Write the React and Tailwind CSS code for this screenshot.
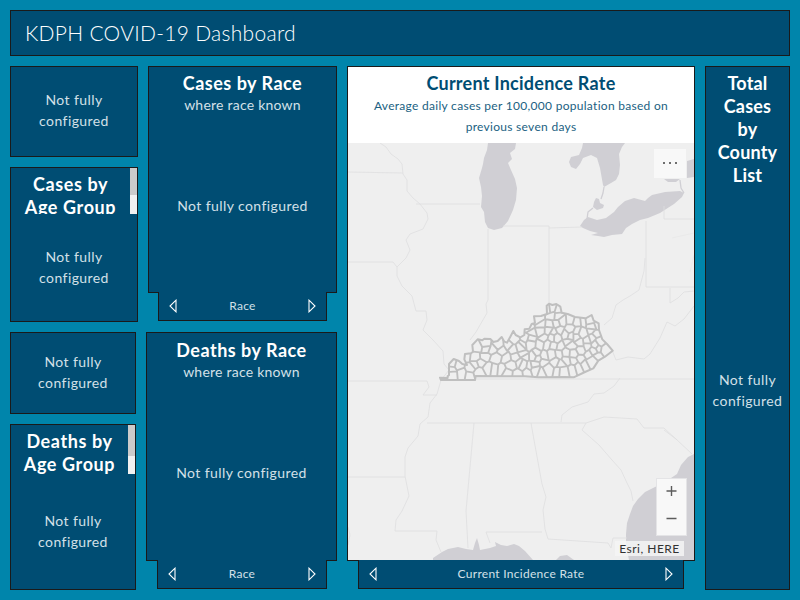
import React from "react";

const OUTLINE = [
  [285, 413], [308, 414], [308, 409], [312, 405], [312, 372], [326, 357], [342, 363], [352, 372], [366, 375],
  [358, 358], [360, 342], [378, 340], [384, 335], [382, 315], [398, 298], [412, 301], [418, 296], [436, 297],
  [445, 306], [458, 303], [470, 291], [478, 305], [486, 308], [496, 290], [505, 273], [512, 285], [526, 292],
  [538, 285], [539, 268], [553, 266], [560, 252], [570, 249], [567, 229], [588, 228], [606, 222], [605, 197],
  [612, 191], [622, 195], [634, 192], [646, 200], [650, 218], [668, 222], [690, 231], [722, 235], [740, 225],
  [746, 242], [761, 250], [762, 270], [772, 298], [786, 312], [803, 332], [780, 350], [760, 362], [745, 385],
  [720, 396], [686, 412], [660, 411], [580, 412], [540, 409], [392, 408], [390, 420], [288, 420],
];

const WEST = [
  [70, 203], [88, 208], [68, 222], [68, 240], [93, 235], [118, 240], [118, 220], [112, 188], [130, 188],
  [135, 208], [150, 205], [150, 232], [172, 220], [192, 222], [212, 222], [140, 155], [165, 142], [168, 162],
  [165, 185], [190, 165], [205, 148], [215, 168], [198, 188], [228, 190], [245, 210], [235, 235], [260, 236],
  [268, 205], [250, 135], [232, 150], [250, 165], [275, 155], [255, 185], [280, 178],
];

const EAST = [
  [10, 150], [15, 185], [8, 208], [30, 210], [22, 232], [50, 228], [42, 208], [35, 185], [55, 190], [15, 130],
  [38, 112], [35, 130], [30, 150], [30, 98], [60, 108], [52, 72], [62, 88], [85, 40], [98, 38], [112, 42],
  [95, 65], [90, 85], [115, 65], [108, 85], [130, 80], [150, 75], [170, 80], [190, 78], [210, 75], [215, 95],
  [230, 90], [150, 98], [120, 105], [85, 105], [100, 112], [135, 120], [115, 130], [95, 130], [70, 130],
  [60, 150], [50, 170], [80, 150], [100, 150], [122, 150], [145, 140], [155, 125], [170, 105], [190, 115],
  [210, 110], [170, 125], [155, 152], [180, 142], [200, 135], [215, 130], [230, 120], [238, 140], [225, 148],
  [205, 155], [185, 165], [160, 175], [140, 175], [118, 178], [95, 178], [75, 180], [70, 200], [85, 225],
  [105, 200], [125, 205], [130, 230], [155, 225], [140, 198], [160, 198], [180, 190], [205, 180], [220, 168],
  [235, 160], [255, 165], [235, 180], [215, 200], [195, 210], [175, 218], [65, 235], [112, 228],
];

const SEEDS = [
  ...WEST.map(([x, y]) => [x + 255, y + 165]),
  ...EAST.map(([x, y]) => [x + 525, y + 165]),
];

// Voronoi cell of one seed, by clipping a box with each bisector.
function cell(seed) {
  let poly = [[270, 170], [820, 170], [820, 440], [270, 440]];
  for (const other of SEEDS) {
    if (other === seed) continue;
    const nx = other[0] - seed[0];
    const ny = other[1] - seed[1];
    const c = (nx * (other[0] + seed[0]) + ny * (other[1] + seed[1])) / 2;
    const next = [];
    poly.forEach((p, i) => {
      const q = poly[(i + 1) % poly.length];
      const dp = p[0] * nx + p[1] * ny - c;
      const dq = q[0] * nx + q[1] * ny - c;
      if (dp <= 0) next.push(p);
      if (dp < 0 !== dq < 0) {
        const t = dp / (dp - dq);
        next.push([p[0] + t * (q[0] - p[0]), p[1] + t * (q[1] - p[1])]);
      }
    });
    poly = next;
  }
  return poly;
}

// Irregular but continuous displacement, so that shared borders stay shared.
const warp = ([x, y]) => [x + 3 * Math.sin(x * 0.31 + y * 0.47), y + 3 * Math.sin(x * 0.43 - y * 0.29)];
const toPath = (pts) => "M" + pts.map((p) => p[0].toFixed(1) + " " + p[1].toFixed(1)).join("L") + "Z";
const COUNTIES = SEEDS.map((s) => toPath(cell(s).map(warp))).join("");
const STATE = toPath(OUTLINE);

function BaseMap() {
  return (
    <svg className="block h-full w-full" viewBox="348 143 346 417" preserveAspectRatio="none">
      <defs>
        <clipPath id="state"><path d={STATE} /></clipPath>
      </defs>
      <rect x="348" y="143" width="346" height="417" fill="#efefef" />
      <g fill="#d0cfd4">
        {/* lakes */}
        <path d="M488 143L487 150L484 158L483 164L482 168L479 178L481 187L482 196L481 207L484 212L485 222L488 228L494 230L502 228L508 221L513 210L516 200L517 188L515 179L511 170L508 163L512 159L510 153L515 149L516 143Z" />
        <path d="M583 143L582 148L579 155L571 157L569 162L571 167L576 169L580 164L583 158L591 155L597 158L600 168L603 185L604 187L611 183L616 180L619 174L620 165L619 154L622 147L625 143Z" />
        <path d="M596 198L599 199L600 203L604 205L603 208L597 210L593 207L594 202Z" />
        <path d="M580 226L584 220L588 217L597 220L606 218L614 212L618 207L625 201L634 198L645 201L648 198L652 195L665 192L680 191L684 193L682 197L674 204L660 213L648 218L640 220L632 224L626 228L622 234L612 235L604 237L598 236L591 235L598 233L590 231L583 228Z" />
        <path d="M664 179L680 179L676 182L668 182Z" />
        <path d="M687 161L694 159L694 177L687 178Z" />
        {/* Gulf coast */}
        <path d="M433 558L442 552L448 549L458 547L466 549L473 550L475 543L477 538L479 545L480 550L490 548L496 546L495 542L501 545L507 546L514 544L519 546L525 551L533 560L433 560Z" />
        <path d="M556 560L560 556L567 555L574 560Z" />
        {/* Atlantic coast */}
        <path d="M694 454L688 457L681 465L677 474L668 480L657 486L645 492L638 499L633 506L630 514L627 523L626 534L626 545L629 560L694 560Z" />
      </g>
      <g fill="none" stroke="#dedee0" strokeWidth=".8" strokeLinejoin="round">
        <path d="M604 187L603 193L601 199M593 208L588 212L587 219M680 180L681 188L684 193" strokeWidth="1.3" stroke="#d0cfd4" />
        <path d="M380 143L386 147L391 154L398 159L402 164L403 174L407 180L407 191L413 198L420 204L427 213L428 219L423 229L410 234L406 240L410 250L406 258L397 267L397 276L402 286L412 296L416 311L426 311L427 320L423 330L433 340L443 351L444 364L449 370L441 380L437 394L430 403L428 417L420 424L418 436L408 448L405 457L405 476L409 496L402 511L396 520L395 531L437 531L436 540L441 552" />
        <path d="M348 172L403 173M416 204L480 204M348 262L393 262L397 267M488 229L488 300L486 304L487 313L480 325L476 332L470 340M503 226L549 226L549 304M549 228L582 227M646 221L646 287L694 287M645 258L644 271L639 290L630 296L623 300L616 305L612 318L604 325M664 206L664 219L694 219M670 288L670 303L678 298L684 292L694 291M694 306L684 319L675 326L667 322L660 338L650 354L644 359L628 357L616 360L612 350" />
        <path d="M348 381L427 381L429 387L423 395L437 395M476 379L694 379M427 423L586 423L604 417L637 419L644 428L664 428L677 440M586 423L582 430L599 445L612 460L621 470L627 483L631 491L633 501M561 422L562 415L572 407L588 402L594 394L604 393L614 386L620 378M474 423L466 511L468 548M531 423L534 440L542 484L546 497L543 510L545 529L548 539L608 543L611 548L613 538L627 538M486 532L542 532M486 532L490 543M664 430L676 439L692 454M348 477L405 477M348 527L350 535L348 545" />
        <path d="M694 233L672 238M694 255L690 272" opacity=".4" />
      </g>
      <g transform="translate(345 240) scale(.33333)" fill="none" stroke="#bfbfbf" strokeLinejoin="round">
        <path d={COUNTIES} strokeWidth="5.6" clipPath="url(#state)" />
        <path d={STATE} strokeWidth="6" />
      </g>
    </svg>
  );
}

const box = "border border-[#1a1a1a] bg-[#004d73]";

function Empty({ narrow, className = "" }) {
  return (
    <div className={"flex flex-1 items-center justify-center text-center text-[14px] leading-[21px] tracking-[.42px] text-[#d3e0e8] " + className}>
      {narrow ? <p>Not fully<br />configured</p> : <p>Not fully configured</p>}
    </div>
  );
}

function Arrow({ right }) {
  return (
    <svg className="h-[14px] w-[8px]" viewBox="0 0 8 14" fill="none" stroke="#fff" strokeWidth="1.1">
      <path d={right ? "M1 1.2V12.8L7 7Z" : "M7 1.2V12.8L1 7Z"} />
    </svg>
  );
}

function Tab({ label, className }) {
  return (
    <div className={"relative -mt-px flex justify-between border border-t-0 border-[#1a1a1a] bg-[#004d73] pt-[7px] text-[12px] leading-[14px] tracking-[.28px] text-[#d3e0e8] " + className}>
      <Arrow />
      <span>{label}</span>
      <Arrow right />
    </div>
  );
}

function Scroller({ lines, className, thumb }) {
  return (
    <div className={"flex overflow-hidden " + className}>
      <h2 className="flex-1 pt-[5px] text-center text-[18px] leading-[23px] font-bold tracking-[.6px] whitespace-nowrap text-white">
        {lines[0]}<br />{lines[1]}
      </h2>
      <div className="w-[7px] shrink-0 bg-[#f1f1f1]">
        <div className={"bg-[#cbcbcb] " + thumb} />
      </div>
    </div>
  );
}

function RaceCard({ title, className }) {
  return (
    <div className={"flex flex-col text-center " + box + " " + className}>
      <h2 className="text-[18px] leading-[23px] font-bold tracking-[.5px] text-white">{title}</h2>
      <p className="-mt-px text-[14px] leading-[21px] tracking-[.23px] text-[#d3e0e8]">where race known</p>
      <Empty className="pt-[3px]" />
    </div>
  );
}

export default function App() {
  return (
    <div className="flex h-[600px] w-[800px] flex-col gap-[10px] overflow-hidden bg-[#0085ab] p-[10px] font-['Lato','Open_Sans',sans-serif]">
      <header className={"flex h-[46px] shrink-0 items-center pl-[14px] " + box}>
        <h1 className="text-[21px] font-light tracking-[.28px] whitespace-nowrap text-white">KDPH COVID-19 Dashboard</h1>
      </header>
      <main className="flex h-[524px] gap-[10px]">
        <div className="flex w-[327px] shrink-0 flex-col gap-[10px]">
          <div className="flex h-[256px] gap-[10px]">
            <div className="flex w-[128px] flex-col gap-[10px]">
              <section className={"flex h-[91px] " + box}><Empty narrow className="pb-[3px]" /></section>
              <section className={"flex h-[155px] flex-col " + box}>
                <Scroller lines={["Cases by", "Age Group"]} className="h-[46px]" thumb="h-[27px]" />
                <div className="flex h-[108px]"><Empty narrow /></div>
              </section>
            </div>
            <section className="flex w-[189px] flex-col">
              <RaceCard title="Cases by Race" className="h-[227px] pt-[5px]" />
              <Tab label="Race" className="mr-[10px] ml-[10px] h-[29px] px-[10px]" />
            </section>
          </div>
          <div className="flex h-[258px] gap-[10px]">
            <div className="flex w-[126px] flex-col gap-[10px]">
              <section className={"flex h-[82px] " + box}><Empty narrow className="pb-[2px]" /></section>
              <section className={"flex h-[166px] flex-col " + box}>
                <Scroller lines={["Deaths by", "Age Group"]} className="h-[49px]" thumb="h-[31px]" />
                <div className="flex flex-1"><Empty narrow className="pb-[2px]" /></div>
              </section>
            </div>
            <section className="flex w-[191px] flex-col">
              <RaceCard title="Deaths by Race" className="h-[229px] pt-[6px]" />
              <Tab label="Race" className="mr-[10px] ml-[11px] h-[29px] px-[10px]" />
            </section>
          </div>
        </div>
        <section className="flex w-[348px] shrink-0 flex-col">
          <div className="h-[495px] border border-[#1a1a1a] bg-white">
            <div className="h-[76px] pt-[5px] text-center text-[#004d73]">
              <h2 className="text-[18px] leading-[23px] font-bold tracking-[.25px]">Current Incidence Rate</h2>
              <p className="text-[12px] leading-[21px] tracking-[.29px] text-[#1b5f82]">
                Average daily cases per 100,000 population based on<br />previous seven days
              </p>
            </div>
            <div className="relative h-[417px]">
              <BaseMap />
              <button className="absolute top-[6px] right-[8px] flex h-[29px] w-[32px] items-center justify-center gap-[4px] bg-[#f8f8f8] pb-[1px]">
                <span className="size-[2px] bg-[#6e6e6e]" />
                <span className="size-[2px] bg-[#6e6e6e]" />
                <span className="size-[2px] bg-[#6e6e6e]" />
              </button>
              <div className="absolute top-[335px] right-[7px] h-[58px] w-[31px] border border-[#e4e4e6] bg-[#f8f8f8]">
                <svg className="h-full w-full" viewBox="0 0 29 56" fill="none" stroke="#5c5c5c" strokeWidth="1.4">
                  <path d="M9.5 12H19.5M14.5 7V17M9.5 39.5H19.5" />
                </svg>
              </div>
              <div className="absolute top-[398px] right-[10px] h-[15px] w-[69px] bg-[#f5f5f5]/85 text-center text-[12px] leading-[15px] tracking-[.5px] whitespace-nowrap text-[#323232]">
                Esri, HERE
              </div>
            </div>
          </div>
          <Tab label="Current Incidence Rate" className="mr-[11px] ml-[11px] h-[29px] px-[10px]" />
        </section>
        <section className={"flex w-[85px] shrink-0 flex-col " + box}>
          <h2 className="mt-[5px] text-center text-[18px] leading-[23px] font-bold tracking-[.2px] text-white">
            Total<br />Cases<br />by<br />County<br />List
          </h2>
          <Empty narrow className="pt-[4px]" />
        </section>
      </main>
    </div>
  );
}
